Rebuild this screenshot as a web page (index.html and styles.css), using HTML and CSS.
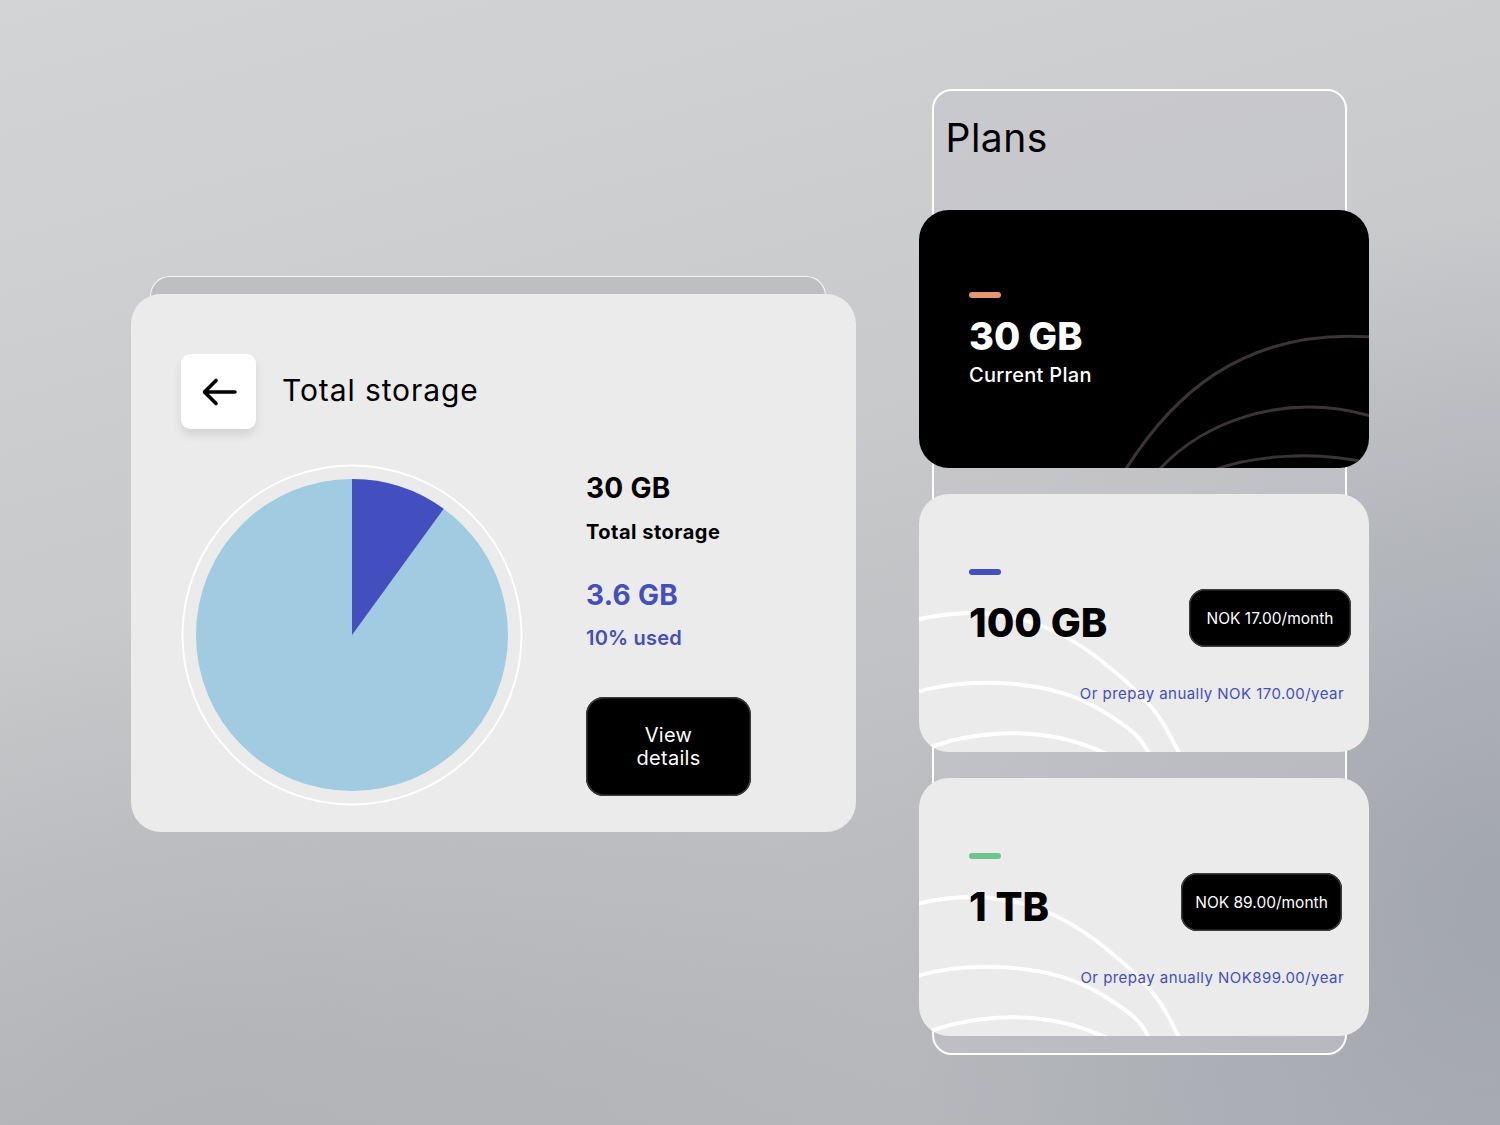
FILE: index.html
```html
<!DOCTYPE html>
<html lang="en">
<head>
<meta charset="utf-8">
<title>Storage</title>
<link rel="stylesheet" href="styles.css">
</head>
<body>
<main class="page">
  <section class="storage">
    <div class="storage-back"></div>
    <div class="storage-card">
      <header class="storage-head">
        <button class="back-btn" aria-label="Back">
          <svg width="36" height="30" viewBox="0 0 36 30"><path d="M34 15H4 M15 3.5L3.5 15L15 26.5" fill="none" stroke="#000" stroke-width="3.6" stroke-linecap="round" stroke-linejoin="round"/></svg>
        </button>
        <h1 class="storage-title">Total storage</h1>
      </header>
      <div class="storage-body">
        <svg class="pie" width="342" height="342" viewBox="0 0 342 342">
          <circle cx="171" cy="171" r="169.5" fill="none" stroke="#fff" stroke-width="2"/>
          <circle cx="171" cy="171" r="156" fill="#a1cbe0"/>
          <path d="M171 171 L171 15 A156 156 0 0 1 262.7 44.8 Z" fill="#434fbf"/>
        </svg>
        <div class="stats">
          <div class="stat-big">30 GB</div>
          <div class="stat-label">Total storage</div>
          <div class="stat-big blue used-big">3.6 GB</div>
          <div class="stat-label blue used-label">10% used</div>
          <button class="details-btn">View<br>details</button>
        </div>
      </div>
    </div>
  </section>

  <section class="plans">
    <h2 class="plans-title">Plans</h2>
    <div class="plan plan-current">
      <svg class="plan-deco" width="450" height="258" viewBox="0 0 450 258">
        <g fill="none" stroke="#3b3434" stroke-width="3">
          <path d="M205 262 C 250 190, 320 118, 452 127"/>
          <path d="M238 262 C 280 215, 360 180, 452 206"/>
          <path d="M290 262 C 330 245, 400 240, 452 254"/>
        </g>
      </svg>
      <span class="bar bar-orange"></span>
      <div class="current-size">30 GB</div>
      <div class="current-label">Current Plan</div>
    </div>
    <div class="plan plan-light">
      <svg class="plan-deco" width="450" height="258" viewBox="0 0 450 258">
        <g fill="none" stroke="#fff" stroke-width="4">
          <path d="M-10 128 C 40 114, 110 110, 180 165 S 245 235, 262 262"/>
          <path d="M-10 200 C 50 182, 130 185, 180 215 S 222 250, 232 262"/>
          <path d="M-10 262 C 40 238, 120 226, 192 262"/>
        </g>
      </svg>
      <span class="bar bar-blue"></span>
      <div class="plan-row">
        <div class="plan-size">100 GB</div>
        <span class="price-pill pill-a">NOK 17.00/month</span>
      </div>
      <p class="prepay">Or prepay anually NOK 170.00/year</p>
    </div>
    <div class="plan plan-light">
      <svg class="plan-deco" width="450" height="258" viewBox="0 0 450 258">
        <g fill="none" stroke="#fff" stroke-width="4">
          <path d="M-10 128 C 40 114, 110 110, 180 165 S 245 235, 262 262"/>
          <path d="M-10 200 C 50 182, 130 185, 180 215 S 222 250, 232 262"/>
          <path d="M-10 262 C 40 238, 120 226, 192 262"/>
        </g>
      </svg>
      <span class="bar bar-green"></span>
      <div class="plan-row">
        <div class="plan-size">1 TB</div>
        <span class="price-pill pill-b">NOK 89.00/month</span>
      </div>
      <p class="prepay">Or prepay anually NOK899.00/year</p>
    </div>
  </section>
</main>
</body>
</html>
```

FILE: styles.css
```css
* { box-sizing: border-box; }

html, body {
  margin: 0;
  padding: 0;
}

body {
  width: 1500px;
  height: 1125px;
  overflow: hidden;
  font-family: "Inter", "Noto Sans", sans-serif;
  color: #000;
  background:
    radial-gradient(ellipse 600px 700px at 1500px 900px, rgba(150,155,165,0.6), rgba(150,155,165,0) 100%),
    radial-gradient(ellipse 700px 500px at 200px 1125px, rgba(170,172,175,0.5), rgba(170,172,175,0) 100%),
    linear-gradient(165deg, #d3d4d6 0%, #c9cacc 40%, #b7b9bc 80%, #b3b5b9 100%);
}

.page {
  display: flex;
  align-items: flex-start;
  padding: 89px 0 0 131px;
}

/* ---------- Storage card ---------- */
.storage {
  width: 725px;
  margin-top: 187px;
  display: flex;
  flex-direction: column;
}

.storage-back {
  margin: 0 30px 0 19px;
  height: 40px;
  border: 1px solid #f6f6f6;
  border-bottom: none;
  border-radius: 20px 20px 0 0;
  background: #bdbfc0;
}

.storage-card {
  margin-top: -22px;
  position: relative;
  background: #ebebeb;
  border-radius: 30px;
  padding: 60px 50px 26px 50px;
}

.storage-head {
  display: flex;
  align-items: center;
  gap: 26px;
}

.back-btn {
  width: 75px;
  height: 75px;
  border: none;
  border-radius: 9px;
  background: #fff;
  box-shadow: 0 6px 10px rgba(0,0,0,0.10);
  display: flex;
  align-items: center;
  justify-content: center;
  padding: 0;
}

.storage-title {
  margin: 0 0 3px 0;
  font-size: 30px;
  font-weight: 400;
  letter-spacing: 0.9px;
}

.storage-body {
  display: flex;
  align-items: flex-start;
  gap: 63px;
  margin-top: 35px;
}

.pie { display: block; }

.stats {
  display: flex;
  flex-direction: column;
  align-items: flex-start;
}

.stat-big {
  font-size: 28px;
  font-weight: 700;
  line-height: 34px;
  margin-top: 7px;
  letter-spacing: 0.3px;
}

.stat-label {
  font-size: 20px;
  font-weight: 700;
  line-height: 24px;
  margin-top: 15px;
  letter-spacing: 0.5px;
}

.blue { color: #434fbf; }

.used-big { margin-top: 34px; }

.used-label {
  margin-top: 14px;
  font-weight: 600;
  letter-spacing: 0.2px;
}

.details-btn {
  margin-top: 47px;
  width: 165px;
  height: 99px;
  background: #000;
  color: #fff;
  border: none;
  border-radius: 18px;
  box-shadow: inset 0 0 0 1.5px #3a3a3a;
  font-family: inherit;
  font-size: 20px;
  line-height: 23px;
  font-weight: 400;
  letter-spacing: 0.3px;
}

/* ---------- Plans ---------- */
.plans {
  width: 415px;
  margin-left: 76px;
  border: 2px solid #ffffff;
  border-radius: 20px;
  background: rgba(196,196,202,0.55);
  padding: 0 0 17px 0;
  display: flex;
  flex-direction: column;
  gap: 26px;
}

.plans-title {
  margin: 23.5px 0 23.5px 11.5px;
  font-size: 39px;
  font-weight: 400;
  line-height: 46px;
  letter-spacing: 0.5px;
}

.plan {
  position: relative;
  overflow: hidden;
  margin: 0 -24px 0 -15px;
  height: 258px;
  border-radius: 30px;
  padding: 75px 25px 0 50px;
  display: flex;
  flex-direction: column;
}

.plan > *:not(.plan-deco) { position: relative; }

.plan-deco {
  position: absolute;
  left: 0;
  top: 0;
}

.plan-current {
  background: #000;
  color: #fff;
  padding-top: 82px;
}

.plan-light { background: #ebebeb; }

.bar {
  display: block;
  width: 32px;
  height: 6px;
  border-radius: 3px;
}
.bar-orange { background: #e5966b; }
.bar-blue { background: #434fbf; }
.bar-green { background: #6cc48f; }

.current-size {
  font-size: 38px;
  font-weight: 800;
  line-height: 44px;
  margin-top: 16px;
}

.current-label {
  font-size: 20px;
  font-weight: 500;
  line-height: 24px;
  margin-top: 5px;
  letter-spacing: 0.3px;
}

.plan-row {
  display: flex;
  align-items: center;
  justify-content: space-between;
  margin-top: 14px;
}

.plan-size {
  font-size: 40px;
  font-weight: 800;
  line-height: 48px;
  margin-top: 10px;
}

.price-pill {
  height: 58px;
  display: flex;
  align-items: center;
  justify-content: center;
  background: #000;
  color: #fff;
  border-radius: 16px;
  box-shadow: inset 0 0 0 1.5px #3c3c3c;
  font-size: 15.5px;
  font-weight: 400;
}
.pill-a { width: 162px; margin-right: -7px; }
.pill-b { width: 161px; margin-right: 2px; }

.prepay {
  margin: 37px 0 0 0;
  text-align: right;
  color: #434fbf;
  font-size: 15px;
  line-height: 20px;
  letter-spacing: 0.45px;
}
```
